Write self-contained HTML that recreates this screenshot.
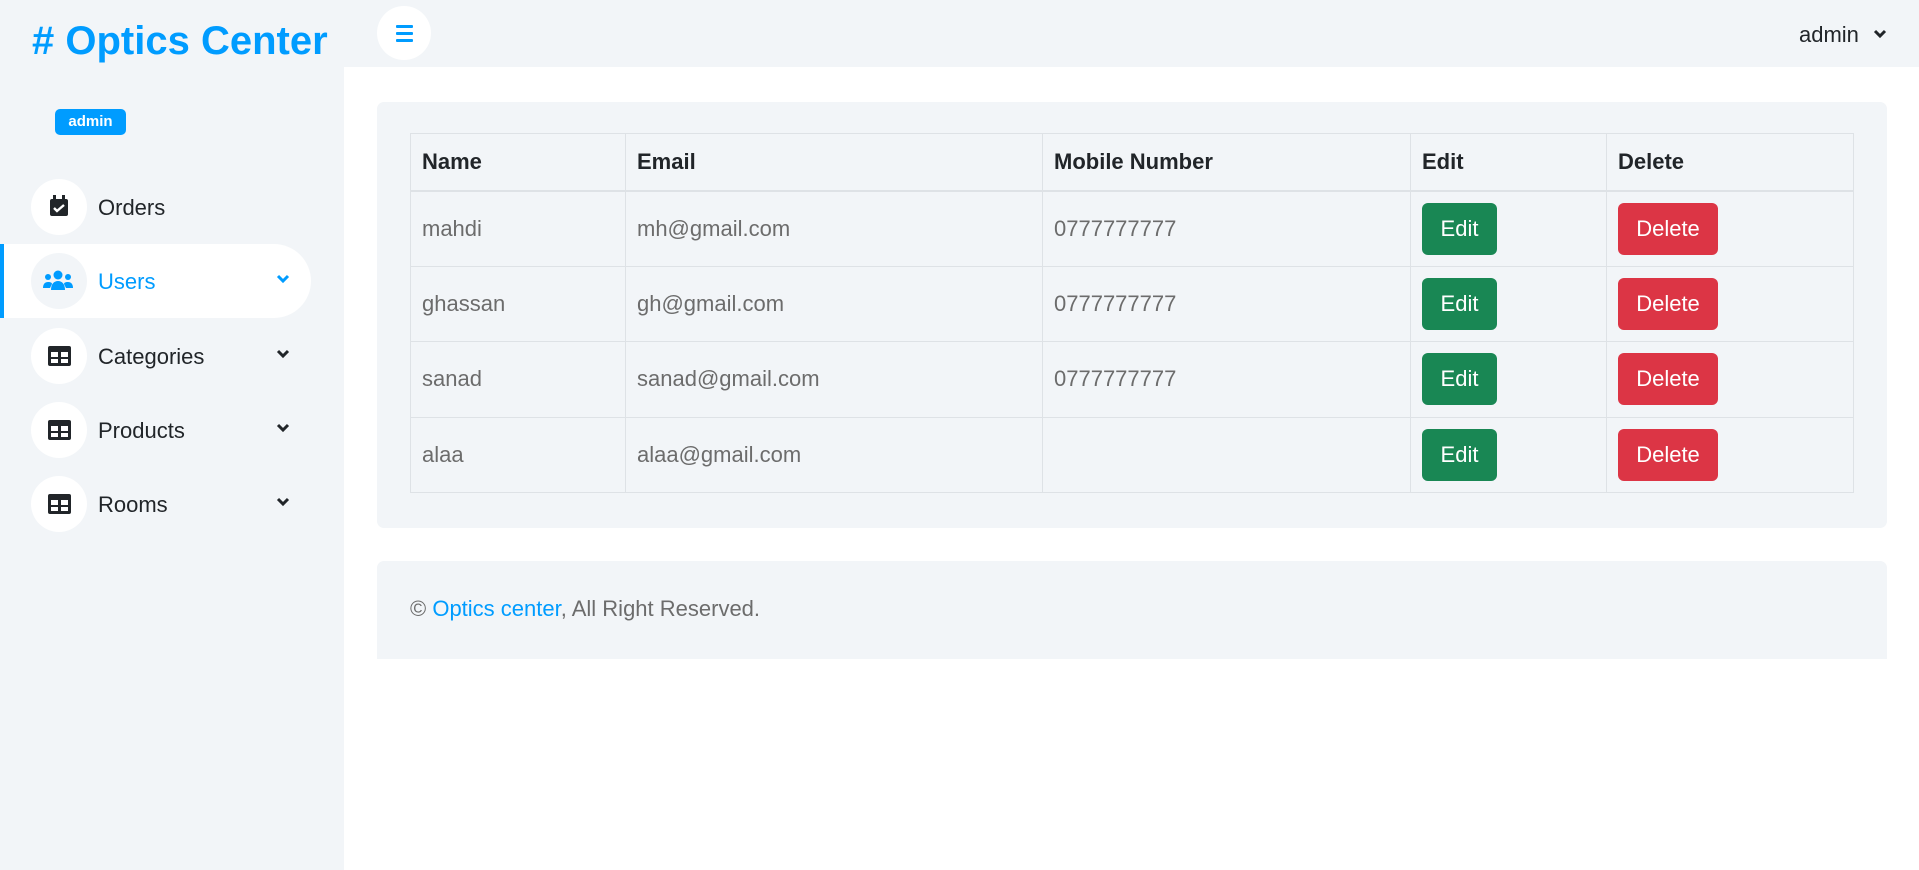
<!DOCTYPE html>
<html><head><meta charset="utf-8"><style>
*{box-sizing:border-box;margin:0;padding:0}
body{width:1919px;height:870px;overflow:hidden;background:#fff;font-family:"Liberation Sans",Arial,sans-serif;position:relative}
.side{position:absolute;left:0;top:0;width:344px;height:870px;background:#f2f5f8}
.top{position:absolute;left:344px;top:0;right:0;height:67px;background:#f2f5f8}
.logo{position:absolute;left:32px;top:19px;font-size:40px;font-weight:bold;color:#009cff;white-space:nowrap}
.tog{position:absolute;left:377px;top:6px;width:54px;height:54px;border-radius:50%;background:#fff}
.tog i{position:absolute;left:19px;height:3px;width:17px;background:#009cff;border-radius:1px}
.badge{position:absolute;left:55px;top:109px;width:71px;height:26px;border-radius:5px;background:#009cff;color:#fff;font-weight:bold;font-size:15px;text-align:center;line-height:26px}
.item{position:absolute;left:0;width:311px;height:74px}
.item.act{background:#fff;border-radius:0 37px 37px 0;border-left:4px solid #009cff}
.circ{position:absolute;left:31px;top:9px;width:56px;height:56px;border-radius:50%;background:#fff}
.act .circ{left:27px;background:#f2f5f8}
.lbl{position:absolute;left:98px;top:1px;line-height:74px;font-size:22px;color:#212529}
.act .lbl{left:94px;color:#009cff}
.chev{position:absolute;left:276px;top:30px}
.act .chev{left:272px}
.card{position:absolute;left:377px;top:102px;width:1510px;height:426px;background:#f2f5f8;border-radius:7px}
table{position:absolute;left:410px;top:133px;width:1444px;border-collapse:collapse;font-size:22px}
td,th{border:1px solid #dee2e6;padding:0 11px;text-align:left;color:#6c6c6c}
th{color:#212529;height:57px;border-bottom:2px solid #dee2e6}
td{height:75.5px}
.b{display:inline-block;height:52px;line-height:52px;border-radius:6px;color:#fff;text-align:center}
.e{background:#198754;width:75px}
.d{background:#dc3545;width:100px}
.foot{position:absolute;left:377px;top:561px;width:1510px;height:98px;background:#f2f5f8;border-radius:7px 7px 0 0;font-size:22px;color:#6c6c6c;padding:35px 0 0 33px}
.foot a{color:#009cff;text-decoration:none}
</style></head><body>
<div class="side"></div><div class="top"></div>
<div class="logo"># Optics Center</div>
<div class="tog"><i style="top:19px"></i><i style="top:26px"></i><i style="top:33px"></i></div>
<div style="position:absolute;left:1799px;top:22px;font-size:22px;color:#212529">admin</div>
<svg style="position:absolute;left:1873px;top:29px" width="14" height="10" viewBox="0 0 14 10"><path d="M2 2l5 5 5-5" stroke="#212529" stroke-width="3" fill="none"/></svg>
<div class="badge">admin</div>

<div class="item" style="top:170px"><div class="circ"><svg style="position:absolute;left:18px;top:16px" width="20" height="22" viewBox="0 0 20 22"><rect x="1" y="4" width="18" height="17" rx="2" fill="#212529"/><rect x="4" y="0" width="3" height="5" fill="#212529"/><rect x="13" y="0" width="3" height="5" fill="#212529"/><path d="M5 13l3 3 7-6" stroke="#fff" stroke-width="2.4" fill="none"/></svg></div><div class="lbl">Orders</div></div>

<div class="item act" style="top:244px"><div class="circ"><svg style="position:absolute;left:12px;top:17px" width="30" height="22" viewBox="0 0 30 22"><circle cx="15" cy="5" r="4.5" fill="#009cff"/><circle cx="5" cy="7" r="3" fill="#009cff"/><circle cx="25" cy="7" r="3" fill="#009cff"/><path d="M8 20c0-6 3-9 7-9s7 3 7 9z" fill="#009cff"/><path d="M0 18c0-4 2-6 5-6s4 1 4 2l-2 4z" fill="#009cff"/><path d="M30 18c0-4-2-6-5-6s-4 1-4 2l2 4z" fill="#009cff"/></svg></div><div class="lbl">Users</div><svg class="chev" width="14" height="10" viewBox="0 0 14 10"><path d="M2 2l5 5 5-5" stroke="#009cff" stroke-width="3" fill="none"/></svg></div>

<div class="item" style="top:319px"><div class="circ"><svg style="position:absolute;left:17px;top:18px" width="23" height="20" viewBox="0 0 23 20"><rect x="0" y="0" width="23" height="20" rx="2" fill="#212529"/><rect x="3" y="6" width="7" height="5" fill="#fff"/><rect x="13" y="6" width="7" height="5" fill="#fff"/><rect x="3" y="13" width="7" height="4" fill="#fff"/><rect x="13" y="13" width="7" height="4" fill="#fff"/></svg></div><div class="lbl">Categories</div><svg class="chev" width="14" height="10" viewBox="0 0 14 10"><path d="M2 2l5 5 5-5" stroke="#212529" stroke-width="3" fill="none"/></svg></div>

<div class="item" style="top:393px"><div class="circ"><svg style="position:absolute;left:17px;top:18px" width="23" height="20" viewBox="0 0 23 20"><rect x="0" y="0" width="23" height="20" rx="2" fill="#212529"/><rect x="3" y="6" width="7" height="5" fill="#fff"/><rect x="13" y="6" width="7" height="5" fill="#fff"/><rect x="3" y="13" width="7" height="4" fill="#fff"/><rect x="13" y="13" width="7" height="4" fill="#fff"/></svg></div><div class="lbl">Products</div><svg class="chev" width="14" height="10" viewBox="0 0 14 10"><path d="M2 2l5 5 5-5" stroke="#212529" stroke-width="3" fill="none"/></svg></div>

<div class="item" style="top:467px"><div class="circ"><svg style="position:absolute;left:17px;top:18px" width="23" height="20" viewBox="0 0 23 20"><rect x="0" y="0" width="23" height="20" rx="2" fill="#212529"/><rect x="3" y="6" width="7" height="5" fill="#fff"/><rect x="13" y="6" width="7" height="5" fill="#fff"/><rect x="3" y="13" width="7" height="4" fill="#fff"/><rect x="13" y="13" width="7" height="4" fill="#fff"/></svg></div><div class="lbl">Rooms</div><svg class="chev" width="14" height="10" viewBox="0 0 14 10"><path d="M2 2l5 5 5-5" stroke="#212529" stroke-width="3" fill="none"/></svg></div>

<div class="card"></div>
<table>
<colgroup><col style="width:215px"><col style="width:417px"><col style="width:368px"><col style="width:196px"><col></colgroup>
<tr><th>Name</th><th>Email</th><th>Mobile Number</th><th>Edit</th><th>Delete</th></tr>
<tr><td>mahdi</td><td>mh@gmail.com</td><td>0777777777</td><td><span class="b e">Edit</span></td><td><span class="b d">Delete</span></td></tr>
<tr><td>ghassan</td><td>gh@gmail.com</td><td>0777777777</td><td><span class="b e">Edit</span></td><td><span class="b d">Delete</span></td></tr>
<tr><td>sanad</td><td>sanad@gmail.com</td><td>0777777777</td><td><span class="b e">Edit</span></td><td><span class="b d">Delete</span></td></tr>
<tr><td>alaa</td><td>alaa@gmail.com</td><td></td><td><span class="b e">Edit</span></td><td><span class="b d">Delete</span></td></tr>
</table>
<div class="foot">© <a>Optics center</a>, All Right Reserved.</div>
</body></html>
